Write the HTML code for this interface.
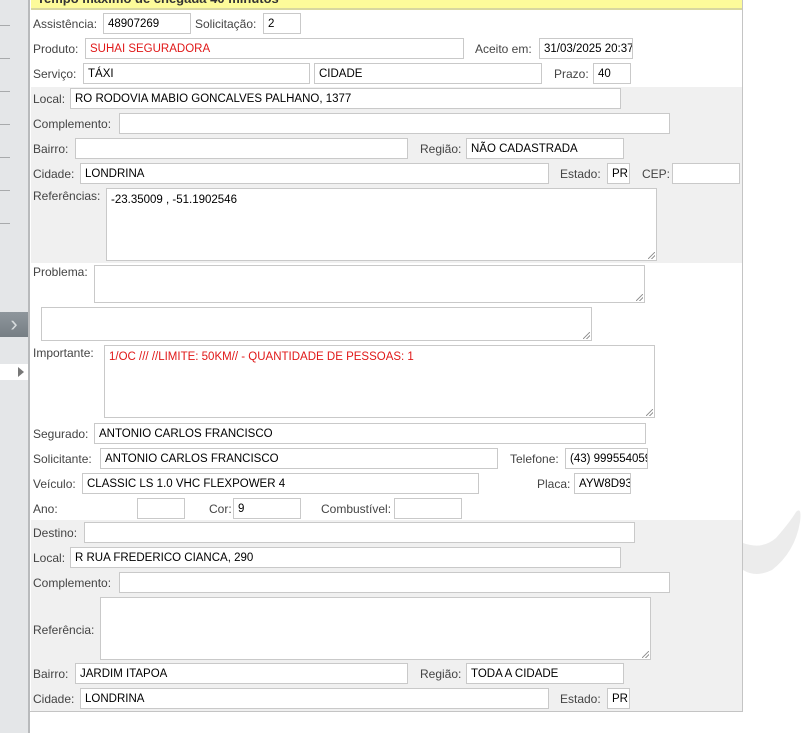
<!DOCTYPE html>
<html><head><meta charset="utf-8"><style>
*{margin:0;padding:0;box-sizing:border-box}
body{width:807px;height:733px;background:#fff;position:relative;overflow:hidden;font-family:"Liberation Sans",sans-serif}
.sb{position:absolute;left:0;top:0;width:30px;height:733px;background:#e4e6e8;border-right:2px solid #b8babc}
.ln{position:absolute;left:0;width:10px;height:1px;background:#a8aaac}
.panel{position:absolute;left:30px;top:0;width:713px;height:712px;border-right:1px solid #c4c4c4;border-bottom:1px solid #c4c4c4}
.band{position:absolute;left:31px;width:711px;background:#f0f0f0}
.hdr{position:absolute;left:31px;top:0;width:711px;height:10px;background:#fdfb9a;border-bottom:2px solid #d8d7a0;overflow:hidden}
.hdr span{position:absolute;left:6px;top:-9px;font-weight:bold;font-size:13px;color:#333}
.l{position:absolute;font-size:12px;color:#444;line-height:14px}
.i{position:absolute;height:21px;background:#fff;border:1px solid #c9c9c9;font-size:11.5px;color:#000;padding:4px 0 0 4px;white-space:nowrap;overflow:hidden;line-height:12px}
.t{position:absolute;background:#fff;border:1px solid #c9c9c9;font-size:11.5px;padding:5px 0 0 4px;line-height:12px}
.t::after{content:"";position:absolute;right:1px;bottom:1px;width:7px;height:7px;background:linear-gradient(135deg,transparent 45%,#999 46%,#999 54%,transparent 55%,transparent 70%,#999 71%,#999 79%,transparent 80%)}
.r{color:#e01818}
</style></head><body>
<div class="sb">
<div class="ln" style="top:25px"></div><div class="ln" style="top:58px"></div><div class="ln" style="top:91px"></div><div class="ln" style="top:124px"></div><div class="ln" style="top:157px"></div><div class="ln" style="top:190px"></div><div class="ln" style="top:223px"></div>
<div style="position:absolute;left:0;top:312px;width:28px;height:25px;background:linear-gradient(#8e969c,#767e84);color:#d8dcde;font-size:22px;text-align:center;line-height:23px">&#8250;</div>
<div style="position:absolute;left:0;top:364px;width:28px;height:16px;background:#fff"><div style="position:absolute;left:18px;top:3px;border-left:6px solid #777;border-top:5px solid transparent;border-bottom:5px solid transparent"></div></div>
</div>
<svg style="position:absolute;left:0;top:0" width="807" height="733"><path d="M743,543 Q762,550 776,538 Q790,522 796,512 Q802,506 800,522 Q795,552 772,570 Q756,578 743,570 Z" fill="#ececec"/></svg>
<div class="panel"></div>
<div class="band" style="top:87px;height:176px"></div>
<div class="band" style="top:520px;height:191px"></div>
<div class="hdr"><span>Tempo máximo de chegada 40 minutos</span></div>

<div class="l" style="left:33px;top:17px">Assistência:</div><div class="i" style="left:103px;top:13px;width:88px">48907269</div>
<div class="l" style="left:195px;top:17px">Solicitação:</div><div class="i" style="left:263px;top:13px;width:38px">2</div>
<div class="l" style="left:33px;top:42px">Produto:</div><div class="i r" style="left:85px;top:38px;width:379px">SUHAI SEGURADORA</div>
<div class="l" style="left:475px;top:42px">Aceito em:</div><div class="i" style="left:539px;top:38px;width:94px">31/03/2025 20:37</div>
<div class="l" style="left:33px;top:67px">Serviço:</div><div class="i" style="left:83px;top:63px;width:227px">TÁXI</div><div class="i" style="left:314px;top:63px;width:228px">CIDADE</div>
<div class="l" style="left:554px;top:67px">Prazo:</div><div class="i" style="left:593px;top:63px;width:38px">40</div>

<div class="l" style="left:33px;top:92px">Local:</div><div class="i" style="left:70px;top:88px;width:551px">RO RODOVIA MABIO GONCALVES PALHANO, 1377</div>
<div class="l" style="left:33px;top:117px">Complemento:</div><div class="i" style="left:119px;top:113px;width:551px"></div>
<div class="l" style="left:33px;top:142px">Bairro:</div><div class="i" style="left:75px;top:138px;width:333px"></div>
<div class="l" style="left:420px;top:142px">Região:</div><div class="i" style="left:466px;top:138px;width:158px">NÃO CADASTRADA</div>
<div class="l" style="left:33px;top:167px">Cidade:</div><div class="i" style="left:80px;top:163px;width:469px">LONDRINA</div>
<div class="l" style="left:560px;top:167px">Estado:</div><div class="i" style="left:607px;top:163px;width:23px">PR</div>
<div class="l" style="left:642px;top:167px">CEP:</div><div class="i" style="left:672px;top:163px;width:68px"></div>
<div class="l" style="left:33px;top:189px">Referências:</div><div class="t" style="left:106px;top:188px;width:551px;height:73px">-23.35009 , -51.1902546</div>

<div class="l" style="left:33px;top:265px">Problema:</div><div class="t" style="left:94px;top:265px;width:551px;height:38px"></div>
<div class="t" style="left:41px;top:307px;width:551px;height:34px"></div>
<div class="l" style="left:33px;top:346px">Importante:</div><div class="t r" style="left:104px;top:345px;width:551px;height:73px">1/OC /// //LIMITE: 50KM// - QUANTIDADE DE PESSOAS: 1</div>
<div class="l" style="left:33px;top:427px">Segurado:</div><div class="i" style="left:94px;top:423px;width:552px">ANTONIO CARLOS FRANCISCO</div>
<div class="l" style="left:33px;top:452px">Solicitante:</div><div class="i" style="left:100px;top:448px;width:398px">ANTONIO CARLOS FRANCISCO</div>
<div class="l" style="left:510px;top:452px">Telefone:</div><div class="i" style="left:565px;top:448px;width:83px">(43) 999554059</div>
<div class="l" style="left:33px;top:477px">Veículo:</div><div class="i" style="left:82px;top:473px;width:397px">CLASSIC LS 1.0 VHC FLEXPOWER 4</div>
<div class="l" style="left:537px;top:477px">Placa:</div><div class="i" style="left:574px;top:473px;width:57px">AYW8D93</div>
<div class="l" style="left:33px;top:502px">Ano:</div><div class="i" style="left:137px;top:498px;width:48px"></div>
<div class="l" style="left:209px;top:502px">Cor:</div><div class="i" style="left:233px;top:498px;width:68px">9</div>
<div class="l" style="left:321px;top:502px">Combustível:</div><div class="i" style="left:394px;top:498px;width:68px"></div>

<div class="l" style="left:33px;top:526px">Destino:</div><div class="i" style="left:84px;top:522px;width:551px"></div>
<div class="l" style="left:33px;top:551px">Local:</div><div class="i" style="left:70px;top:547px;width:551px">R RUA FREDERICO CIANCA, 290</div>
<div class="l" style="left:33px;top:576px">Complemento:</div><div class="i" style="left:119px;top:572px;width:551px"></div>
<div class="l" style="left:33px;top:623px">Referência:</div><div class="t" style="left:100px;top:597px;width:551px;height:63px"></div>
<div class="l" style="left:33px;top:667px">Bairro:</div><div class="i" style="left:75px;top:663px;width:333px">JARDIM ITAPOA</div>
<div class="l" style="left:420px;top:667px">Região:</div><div class="i" style="left:466px;top:663px;width:158px">TODA A CIDADE</div>
<div class="l" style="left:33px;top:692px">Cidade:</div><div class="i" style="left:80px;top:688px;width:469px">LONDRINA</div>
<div class="l" style="left:560px;top:692px">Estado:</div><div class="i" style="left:607px;top:688px;width:23px">PR</div>
</body></html>
